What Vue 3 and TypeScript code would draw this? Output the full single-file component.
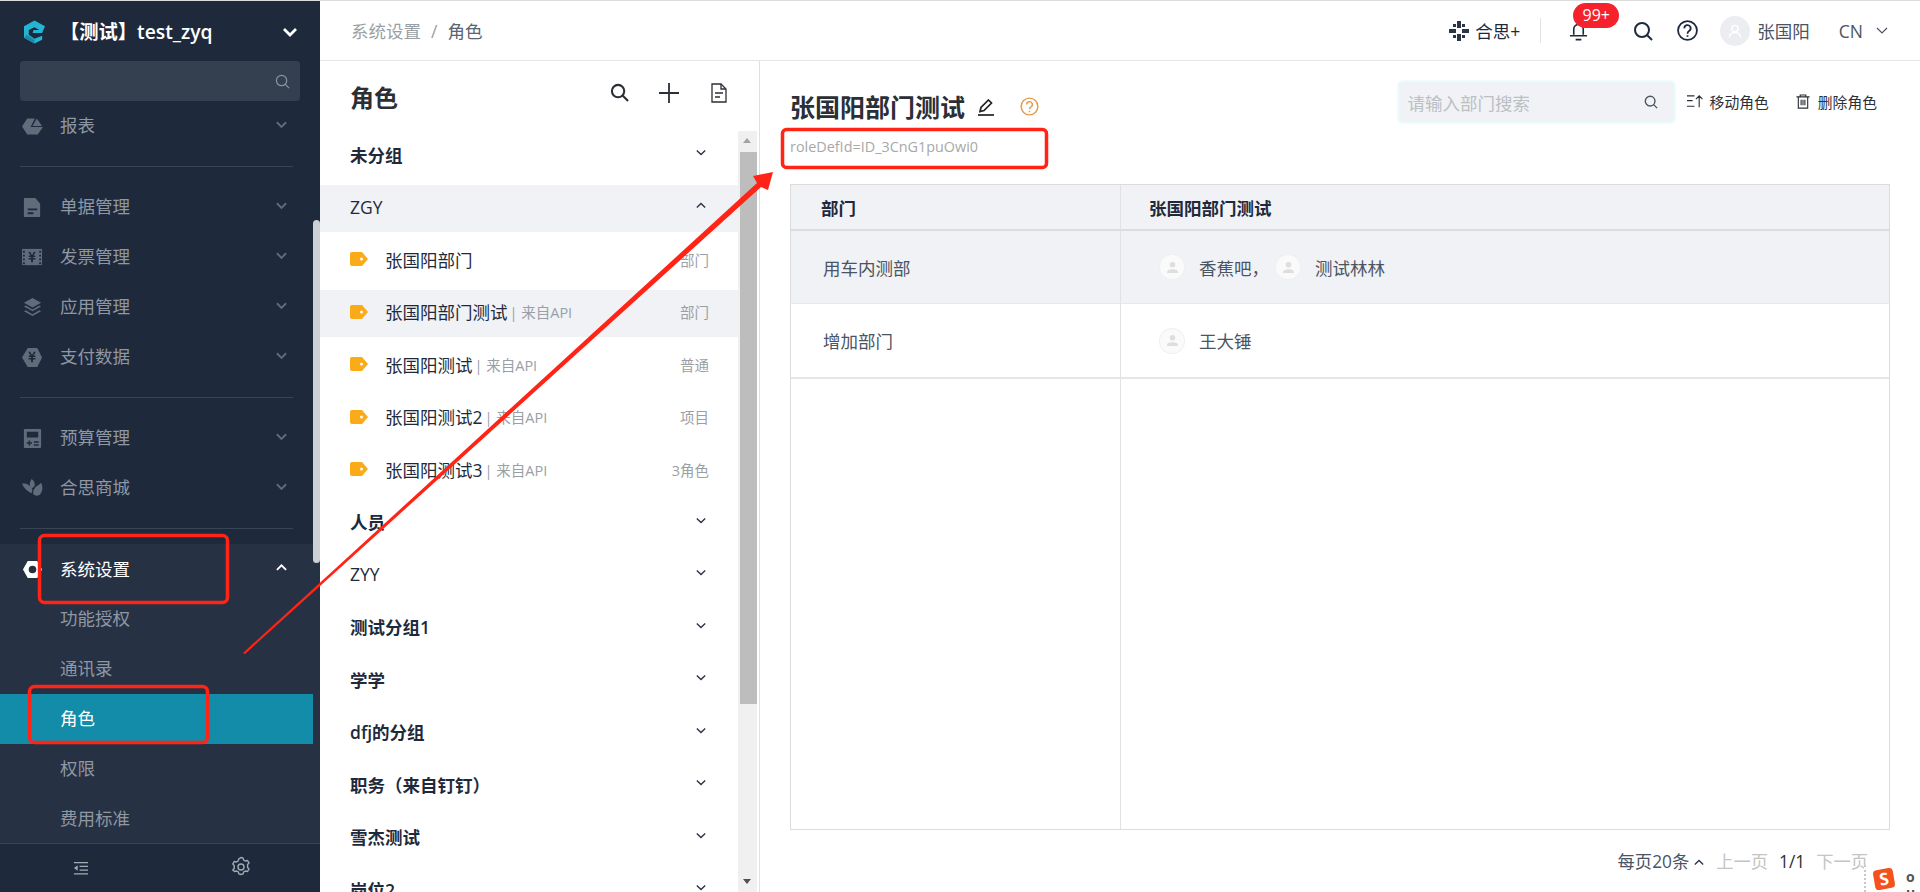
<script setup lang="ts">
interface IconPath {
  d: string;
  fill?: string;
}

interface NavItem {
  label: string;
  icon: IconPath[];
}

interface RoleRow {
  name: string;
  plain?: boolean;
  open?: boolean;
  role?: boolean;
  active?: boolean;
  api?: boolean;
  kind?: string;
}

const BG = '#1e2a3c';

const group1: NavItem[] = [
  { label: '单据管理', icon: [
    { d: 'M3 1h11l5 6v13a1 1 0 0 1-1 1H3a1 1 0 0 1-1-1V2a1 1 0 0 1 1-1z' },
    { d: 'M6 12h10v2H6zM6 16h6v2H6z', fill: BG },
  ] },
  { label: '发票管理', icon: [
    { d: 'M0 2h21v17H0z' },
    { d: 'M1 4h2v2H1zM1 8h2v2H1zM1 12h2v2H1zM1 16h2v2H1zM18 4h2v2h-2zM18 8h2v2h-2zM18 12h2v2h-2zM18 16h2v2h-2z', fill: BG },
    { d: 'M6.500 5h2l2 3.500 2-3.500h2l-2.500 4H14v1.500h-2.500v1H14V13h-2.500v3h-2v-3H7v-1.500h2.500v-1H7V9h2z', fill: BG },
  ] },
  { label: '应用管理', icon: [
    { d: 'M11 1l9 5-9 5-9-5z' },
    { d: 'M2 10l2-1 7 4 7-4 2 1-9 5z' },
    { d: 'M2 15l2-1 7 4 7-4 2 1-9 5z' },
  ] },
  { label: '支付数据', icon: [
    { d: 'M6 1h10l5 10-5 10H6L0 11z' },
    { d: 'M6.500 5h2l2 3.500 2-3.500h2l-2.500 4H14v1.500h-2.500v1H14V13h-2.500v3h-2v-3H7v-1.500h2.500v-1H7V9h2z', fill: BG },
  ] },
];

const group2: NavItem[] = [
  { label: '预算管理', icon: [
    { d: 'M3 1h16a1 1 0 0 1 1 1v18a1 1 0 0 1-1 1H3a1 1 0 0 1-1-1V2a1 1 0 0 1 1-1z' },
    { d: 'M5 4h12v6H5zM5 15h2v-2h1.500v2h2v1.500h-2v2H7v-2H5zM12.500 14h5v1.500h-5zM12.500 17h5v1.500h-5z', fill: BG },
  ] },
  { label: '合思商城', icon: [
    { d: 'M0 6c4-1 8 1 11 6l-1 4C6 14 2 11 0 6z' },
    { d: 'M10 1c3 2 4 5 3 8l-3 2-2-3c0-3 1-5 2-7z' },
    { d: 'M12 17c-1-3 1-7 4-9 2-1 3-2 4-3 2 4 2 9-1 12-2 2-5 2-7 0z' },
  ] },
];

const subItems = ['功能授权', '通讯录', '角色', '权限', '费用标准'];

const rows: RoleRow[] = [
  { name: '未分组' },
  { name: 'ZGY', plain: true, open: true },
  { name: '张国阳部门', role: true, kind: '部门' },
  { name: '张国阳部门测试', role: true, active: true, api: true, kind: '部门' },
  { name: '张国阳测试', role: true, api: true, kind: '普通' },
  { name: '张国阳测试2', role: true, api: true, kind: '项目' },
  { name: '张国阳测试3', role: true, api: true, kind: '3角色' },
  { name: '人员' },
  { name: 'ZYY', plain: true },
  { name: '测试分组1' },
  { name: '学学' },
  { name: 'dfj的分组' },
  { name: '职务（来自钉钉）' },
  { name: '雪杰测试' },
  { name: '岗位2' },
];
</script>

<template>
  <div class="page">
    <aside class="sidebar">
      <div class="brand">
        <svg class="logo" viewBox="0 0 22 24">
          <path d="M11 0l11 6-3 7H9l1-3h6l-5-3-6 3v5l6 4 8-3v4l-8 4-11-6V6z" fill="#23b5d3" />
          <path d="M0 18l11 6v-4L3 15z" fill="#1a8aa6" />
        </svg>
        <span class="brand-name">【测试】test_zyq</span>
        <svg class="brand-arrow" viewBox="0 0 16 10"><path d="M2 2l6 6 6-6" /></svg>
      </div>
      <div class="side-search">
        <svg viewBox="0 0 16 16"><circle cx="7" cy="7" r="5.500" /><path d="M11 11l4 4" /></svg>
      </div>

      <nav class="nav">
        <div class="nav-item">
          <svg class="nav-icon" viewBox="0 0 22 22">
            <path d="M5.500 2.500h8L9 11.500h13l-5.500 8h-11L0 11z" fill="#616c7b" />
            <path d="M15.500 2.500l5.500 8H11z" fill="#616c7b" />
          </svg>
          <span>报表</span>
          <svg class="chev" viewBox="0 0 12 8"><path d="M1 1l5 5 5-5" /></svg>
        </div>
        <div class="nav-line"></div>

        <div v-for="item in group1" :key="item.label" class="nav-item">
          <svg class="nav-icon" viewBox="0 0 22 22">
            <path v-for="p in item.icon" :key="p.d" :d="p.d" :fill="p.fill || '#616c7b'" />
          </svg>
          <span>{{ item.label }}</span>
          <svg class="chev" viewBox="0 0 12 8"><path d="M1 1l5 5 5-5" /></svg>
        </div>
        <div class="nav-line"></div>

        <div v-for="item in group2" :key="item.label" class="nav-item">
          <svg class="nav-icon" viewBox="0 0 22 22">
            <path v-for="p in item.icon" :key="p.d" :d="p.d" :fill="p.fill || '#616c7b'" />
          </svg>
          <span>{{ item.label }}</span>
          <svg class="chev" viewBox="0 0 12 8"><path d="M1 1l5 5 5-5" /></svg>
        </div>
        <div class="nav-line"></div>

        <div class="nav-open">
          <div class="nav-item current">
            <svg class="nav-icon" viewBox="0 0 22 22">
              <path fill-rule="evenodd" d="M6 2h10l5 9-5 9H6l-5-9zM11 7a4 4 0 1 0 0 8 4 4 0 0 0 0-8z" fill="#fff" />
            </svg>
            <span>系统设置</span>
            <svg class="chev up" viewBox="0 0 12 8"><path d="M1 6l5-5 5 5" /></svg>
          </div>
          <div v-for="sub in subItems" :key="sub" class="nav-sub" :class="{ on: sub === '角色' }">{{ sub }}</div>
        </div>
        <div class="nav-thumb"></div>
      </nav>

      <div class="side-foot">
        <svg class="collapse" viewBox="0 0 18 16">
          <path d="M2 1h15v1.500H2zM8 5h9v1.500H8zM8 9h9v1.500H8zM2 13h15v1.500H2zM6 4.500v6l-4-3z" />
        </svg>
        <svg class="gear" viewBox="0 0 20 20">
          <path d="M10 1.500l2 .5.700 2 1.800 1 2-.500 1.500 2.500-1.400 1.600v2.800l1.400 1.600-1.500 2.500-2-.500-1.800 1-.700 2-2 .500-2-.500-.700-2-1.800-1-2 .500L1.800 14l1.400-1.600V9.600L1.800 8l1.500-2.500 2 .500 1.800-1 .700-2z" />
          <circle cx="10" cy="11" r="3" />
        </svg>
      </div>
    </aside>

    <div class="main">
      <header class="topbar">
        <div class="crumb"><span>系统设置</span><i>/</i><b>角色</b></div>
        <div class="tools">
          <svg class="hesi" viewBox="0 0 20 20" fill="#2b3545">
            <path d="M8 0h4v7H8zM8 13h4v7H8zM0 8h7v4H0zM13 8h7v4h-7zM4 3h3v3H4zM13 3h3v3h-3zM4 14h3v3H4zM13 14h3v3h-3z" />
          </svg>
          <span class="hesi-text">合思+</span>
          <span class="tool-line"></span>
          <div class="bell">
            <svg viewBox="0 0 20 18"><path d="M5 12V6a5 5 0 0 1 10 0v6M1 13h18M7 17h6" /></svg>
            <span class="badge">99+</span>
          </div>
          <svg class="tool-search" viewBox="0 0 20 20"><circle cx="9" cy="9" r="7" /><path d="M14 14l5 5" /></svg>
          <svg class="tool-help" viewBox="0 0 20 20">
            <circle cx="10" cy="10" r="9" />
            <path d="M7 8a3 3 0 1 1 4.500 2.500c-1 .600-1.500 1-1.500 2.500" />
            <path d="M10 14.500v1.500" />
          </svg>
          <div class="user-pic">
            <svg viewBox="0 0 20 20"><circle cx="10" cy="7" r="4" /><path d="M3 18c0-4 3-6 7-6s7 2 7 6" /></svg>
          </div>
          <span class="user-name">张国阳</span>
          <span class="lang">CN</span>
          <svg class="lang-arrow" viewBox="0 0 12 8"><path d="M1 1l5 5 5-5" /></svg>
        </div>
      </header>

      <div class="content">
        <section class="role-panel">
          <div class="role-head">
            <h2>角色</h2>
            <div class="role-tools">
              <svg class="rt-search" viewBox="0 0 20 20"><circle cx="8.500" cy="8.500" r="6.500" /><path d="M13 13l6 6" /></svg>
              <svg class="rt-plus" viewBox="0 0 20 20"><path d="M10 0v20M0 10h20" /></svg>
              <svg class="rt-doc" viewBox="0 0 16 20">
                <path d="M1 1h9l5 5v13H1z" />
                <path d="M10 1v5h5M4 10h8M4 14h5" />
              </svg>
            </div>
          </div>
          <div class="role-body">
            <ul class="role-list">
              <li
                v-for="row in rows"
                :key="row.name"
                class="row"
                :class="{ group: !row.role, plain: row.plain, open: row.open, active: row.active }"
              >
                <svg v-if="row.role" class="tag" viewBox="0 0 18 14">
                  <path d="M2 0h10l6 7-6 7H2a2 2 0 0 1-2-2V2a2 2 0 0 1 2-2z" fill="#fbab18" />
                  <circle cx="11.500" cy="7" r="1.500" fill="#fff" />
                </svg>
                <span class="row-name">{{ row.name }}</span>
                <span v-if="row.api" class="row-api">| 来自API</span>
                <span v-if="row.kind" class="row-kind">{{ row.kind }}</span>
                <svg v-if="!row.role" class="row-chev" viewBox="0 0 12 8">
                  <path :d="row.open ? 'M1 6.500l5-5 5 5' : 'M1 1.500l5 5 5-5'" />
                </svg>
              </li>
            </ul>
            <div class="scroll">
              <span class="sc-up"></span>
              <span class="sc-thumb"></span>
              <span class="sc-down"></span>
            </div>
          </div>
        </section>

        <section class="detail">
          <div class="detail-top">
            <div class="detail-title">
              <h1>张国阳部门测试</h1>
              <svg class="edit" viewBox="0 0 16 17">
                <path d="M10.500 1l3 3-7.500 7.500-4 1 1-4z" fill="none" stroke="#222" stroke-width="1.700" />
                <path d="M0 16h16" stroke="#222" stroke-width="1.700" />
              </svg>
              <svg class="hint" viewBox="0 0 20 20">
                <circle cx="10" cy="10" r="8.800" />
                <path d="M7 8a3 3 0 1 1 4.500 2.500c-1 .600-1.500 1-1.500 2.500M10 14.500v1.500" />
              </svg>
            </div>
            <div class="detail-tools">
              <div class="dept-search">
                <span>请输入部门搜索</span>
                <svg viewBox="0 0 16 16"><circle cx="7" cy="7" r="5.500" /><path d="M11 11l4 4" /></svg>
              </div>
              <div class="action move">
                <svg viewBox="0 0 18 16"><path d="M1 2h8M1 7h6M1 13h8M14 14V2M10.500 5.500L14 2l3.500 3.500" /></svg>
                <span>移动角色</span>
              </div>
              <div class="action del">
                <svg viewBox="0 0 14 16"><path d="M0 3h14M4 3V1h6v2M2 3v12h10V3M5 6v6M7 6v6M9 6v6" /></svg>
                <span>删除角色</span>
              </div>
            </div>
          </div>
          <p class="role-id">roleDefId=ID_3CnG1puOwi0</p>

          <div class="table">
            <div class="cell th">部门</div>
            <div class="cell th second">张国阳部门测试</div>
            <div class="cell tint">用车内测部</div>
            <div class="cell tint second people">
              <span class="person">
                <span class="face"><svg viewBox="0 0 14 14"><circle cx="7" cy="4" r="3" /><path d="M1 13c0-3 2-4 6-4s6 1 6 4z" /></svg></span>
                香蕉吧，
              </span>
              <span class="person">
                <span class="face"><svg viewBox="0 0 14 14"><circle cx="7" cy="4" r="3" /><path d="M1 13c0-3 2-4 6-4s6 1 6 4z" /></svg></span>
                测试林林
              </span>
            </div>
            <div class="cell thick">增加部门</div>
            <div class="cell thick second people">
              <span class="person">
                <span class="face"><svg viewBox="0 0 14 14"><circle cx="7" cy="4" r="3" /><path d="M1 13c0-3 2-4 6-4s6 1 6 4z" /></svg></span>
                王大锤
              </span>
            </div>
            <div class="cell blank"></div>
            <div class="cell blank second"></div>
          </div>

          <div class="pager">
            <span class="per">每页20条</span>
            <svg viewBox="0 0 12 8"><path d="M1 6.500l5-5 5 5" /></svg>
            <span class="off">上一页</span>
            <span class="num">1/1</span>
            <span class="off">下一页</span>
          </div>
        </section>
      </div>
    </div>

    <svg class="marks" viewBox="0 0 1920 892">
      <rect x="39.500" y="535.500" width="188" height="67" rx="5" />
      <rect x="29.500" y="686.500" width="178" height="56" rx="5" />
      <rect x="782.500" y="129.500" width="264" height="38" rx="4" />
      <path class="arrow" d="M243 653L757 183L753 176L773 172L768 190L761 187L245 654z" />
    </svg>

    <div class="ime">
      <span class="ime-logo">S</span>
      <span class="ime-keys"><span>o</span><span>u</span></span>
    </div>
  </div>
</template>

<style>
html,
body {
  margin: 0;
  background: #fff;
}
</style>

<style scoped>
.page {
  position: relative;
  display: flex;
  width: 1920px;
  height: 892px;
  overflow: hidden;
  box-sizing: border-box;
  border-top: 1px solid #dcdcdc;
  font-family: 'Open Sans', 'Noto Sans CJK SC', sans-serif;
  color: #1e2a3c;
}

svg {
  display: block;
  flex: none;
}

/* sidebar */
.sidebar {
  width: 320px;
  flex: none;
  display: flex;
  flex-direction: column;
  background: #1e2a3c;
}

.brand {
  height: 59px;
  flex: none;
  display: flex;
  align-items: center;
  padding: 3px 22px 0 24px;
  box-sizing: border-box;
}

.logo {
  width: 21px;
  height: 24px;
}

.brand-name {
  margin-left: 15px;
  font-size: 19.300px;
  line-height: 26px;
  font-weight: 600;
  color: #fff;
  white-space: nowrap;
}

.brand-arrow {
  width: 16px;
  height: 10px;
  margin-left: auto;
  fill: none;
  stroke: #fff;
  stroke-width: 2.800;
}

.side-search {
  height: 40px;
  flex: none;
  margin: 1px 20px 0;
  display: flex;
  align-items: center;
  justify-content: flex-end;
  padding-right: 10px;
  background: #343f50;
  border-radius: 4px;
}

.side-search svg {
  width: 15px;
  height: 15px;
  fill: none;
  stroke: #8a93a0;
  stroke-width: 1.300;
}

.nav {
  position: relative;
  flex: 1;
  min-height: 0;
  overflow: hidden;
}

.nav-item {
  width: 313px;
  height: 50px;
  display: flex;
  align-items: center;
  box-sizing: border-box;
  padding-left: 22px;
  font-size: 17.500px;
  color: #8f97a3;
}

.nav-item > span {
  margin-left: 17px;
  padding-bottom: 3px;
}

.nav-icon {
  width: 21px;
  height: 21px;
}

.chev {
  width: 11px;
  height: 8px;
  margin-left: auto;
  margin-right: 26px;
  margin-bottom: 3px;
  fill: none;
  stroke: #616c7b;
  stroke-width: 2;
}

.nav-line {
  height: 1px;
  margin: 15px 27px 15px 20px;
  background: #394454;
}

.nav-open {
  background: #263244;
}

.current {
  color: #fff;
}

.current > span {
  padding-bottom: 1px;
}

.up {
  stroke: #fff;
}

.nav-sub {
  width: 313px;
  height: 50px;
  box-sizing: border-box;
  padding-left: 60px;
  line-height: 49px;
  font-size: 17.500px;
  color: #8f97a3;
}

.nav-sub.on {
  background: #138ca9;
  color: #fff;
}

.nav-thumb {
  position: absolute;
  top: 119px;
  right: 0;
  width: 7px;
  height: 343px;
  border-radius: 4px;
  background: #cdd1d6;
}

.side-foot {
  position: relative;
  height: 49px;
  flex: none;
  border-top: 1px solid #394454;
  box-sizing: border-box;
  display: flex;
  align-items: center;
}

.collapse {
  width: 17px;
  height: 15px;
  margin-left: 72px;
  fill: #a3aab4;
}

.gear {
  width: 20px;
  height: 20px;
  margin-left: 142px;
  margin-top: -4px;
  fill: none;
  stroke: #a3aab4;
  stroke-width: 1.400;
}

/* top bar */
.main {
  flex: 1;
  min-width: 0;
  display: flex;
  flex-direction: column;
}

.topbar {
  height: 60px;
  flex: none;
  display: flex;
  align-items: center;
  justify-content: space-between;
  box-sizing: border-box;
  padding: 0 32px 0 31px;
  border-bottom: 1px solid #e6e6e6;
}

.crumb {
  font-size: 17.500px;
  color: #9a9fa6;
}

.crumb i {
  font-style: normal;
  margin: 0 10px;
}

.crumb b {
  font-weight: 400;
  color: #5a6472;
}

.tools {
  display: flex;
  align-items: center;
}

.hesi {
  width: 20px;
  height: 20px;
}

.hesi-text {
  margin-left: 6px;
  font-size: 17.500px;
  color: #1e2a3c;
}

.tool-line {
  width: 1px;
  height: 25px;
  margin: 0 28px 0 20px;
  background: #e3e3e3;
}

.bell {
  position: relative;
  width: 19px;
  height: 18px;
  margin-top: 3px;
}

.bell svg {
  width: 19px;
  height: 18px;
  fill: none;
  stroke: #1e2a3c;
  stroke-width: 1.700;
}

.badge {
  position: absolute;
  left: 4px;
  top: -20px;
  width: 46px;
  height: 25px;
  border-radius: 13px;
  background: #f5222d;
  color: #fff;
  font-size: 16px;
  line-height: 25px;
  text-align: center;
}

.tool-search {
  width: 20px;
  height: 20px;
  margin-left: 45px;
  fill: none;
  stroke: #1e2a3c;
  stroke-width: 2;
}

.tool-help {
  width: 21px;
  height: 21px;
  margin-left: 24px;
  fill: none;
  stroke: #1e2a3c;
  stroke-width: 1.700;
}

.user-pic {
  width: 30px;
  height: 30px;
  margin-left: 22px;
  border-radius: 50%;
  background: #ebedf0;
  display: flex;
  align-items: center;
  justify-content: center;
}

.user-pic svg {
  width: 16px;
  height: 16px;
  fill: none;
  stroke: #fff;
  stroke-width: 1.800;
}

.user-name {
  margin-left: 7px;
  font-size: 17.500px;
  color: #4a5463;
}

.lang {
  margin-left: 29px;
  font-size: 17.500px;
  color: #4a5463;
}

.lang-arrow {
  width: 12px;
  height: 8px;
  margin-left: 13px;
  fill: none;
  stroke: #4a5463;
  stroke-width: 1.200;
}

/* role list */
.content {
  flex: 1;
  min-height: 0;
  display: flex;
}

.role-panel {
  width: 440px;
  flex: none;
  box-sizing: border-box;
  border-right: 1px solid #e0e0e0;
  display: flex;
  flex-direction: column;
}

.role-head {
  height: 70px;
  flex: none;
  display: flex;
  align-items: center;
  justify-content: space-between;
  padding: 0 32px 0 30px;
  box-sizing: border-box;
}

.role-head h2 {
  margin: 0;
  font-size: 24px;
  font-weight: 700;
  color: #2b2f36;
}

.role-tools {
  display: flex;
  align-items: center;
  margin-top: -7px;
}

.role-tools svg {
  fill: none;
  stroke: #2b2f36;
}

.rt-search {
  width: 19px;
  height: 19px;
  stroke-width: 2.200;
}

.rt-plus {
  width: 20px;
  height: 20px;
  margin-left: 30px;
  stroke-width: 1.800;
}

.rt-doc {
  width: 16px;
  height: 20px;
  margin-left: 32px;
  stroke-width: 1.300;
}

.role-body {
  flex: 1;
  min-height: 0;
  display: flex;
}

.role-list {
  width: 418px;
  flex: none;
  margin: 0;
  padding: 1px 0 0;
  list-style: none;
  overflow: hidden;
}

.row {
  height: 47px;
  margin-bottom: 5.500px;
  display: flex;
  align-items: center;
  box-sizing: border-box;
  padding: 0 29px 3px 30px;
  font-size: 17.500px;
  white-space: nowrap;
}

.group {
  font-weight: 600;
  color: #1e2a3c;
}

.group.plain {
  font-weight: 500;
}

.group.open,
.row.active {
  background: #f0f2f5;
}

.tag {
  width: 18px;
  height: 14px;
  margin-right: 17px;
}

.row-name {
  color: #1e2a3c;
}

.row-api {
  margin-left: 2px;
  font-size: 14.500px;
  color: #9a9fa6;
}

.row-kind {
  margin-left: auto;
  font-size: 14.500px;
  color: #9a9fa6;
}

.row-chev {
  width: 10px;
  height: 7px;
  margin-left: auto;
  margin-right: 3px;
  margin-bottom: 3px;
  fill: none;
  stroke: #2b3545;
  stroke-width: 1.700;
}

.scroll {
  position: relative;
  width: 19px;
  flex: none;
  background: #f0f0f0;
}

.sc-up,
.sc-down {
  position: absolute;
  left: 5px;
  border-left: 4.500px solid transparent;
  border-right: 4.500px solid transparent;
}

.sc-up {
  top: 7px;
  border-bottom: 5px solid #a3a3a3;
}

.sc-down {
  bottom: 8px;
  border-top: 5px solid #505050;
}

.sc-thumb {
  position: absolute;
  left: 2px;
  top: 21px;
  width: 17px;
  height: 552px;
  background: #bdbdbd;
}

/* detail */
.detail {
  flex: 1;
  min-width: 0;
  box-sizing: border-box;
  padding: 21px 30px 0;
}

.detail-top {
  height: 41px;
  display: flex;
  justify-content: space-between;
  align-items: flex-start;
}

.detail-title {
  display: flex;
  align-items: center;
  padding-top: 9px;
}

.detail-title h1 {
  margin: 0;
  font-size: 25px;
  line-height: 32px;
  font-weight: 700;
  color: #2b2f36;
  white-space: nowrap;
}

.edit {
  width: 16px;
  height: 17px;
  margin-left: 13px;
}

.hint {
  width: 19px;
  height: 19px;
  margin: -2px 0 0 26px;
  fill: none;
  stroke: #e59a4e;
  stroke-width: 1.500;
}

.detail-tools {
  display: flex;
  align-items: center;
  padding-right: 13px;
}

.dept-search {
  width: 275px;
  height: 40px;
  box-sizing: border-box;
  display: flex;
  align-items: center;
  justify-content: space-between;
  padding: 0 16px 0 9px;
  border-radius: 4px;
  background: #f0f2f5;
  box-shadow: 0 0 0 2px #ebfcff;
  font-size: 17.500px;
  color: #bcbfc4;
}

.dept-search svg {
  width: 14px;
  height: 14px;
  fill: none;
  stroke: #4a5463;
  stroke-width: 1.600;
}

.action {
  display: flex;
  align-items: center;
  font-size: 14.800px;
  color: #2b2f36;
  white-space: nowrap;
  padding-bottom: 1px;
}

.move {
  margin-left: 12px;
}

.move svg {
  width: 17px;
  height: 15px;
  margin-right: 7px;
  fill: none;
  stroke: #2b2f36;
  stroke-width: 1.200;
}

.del {
  margin-left: 27px;
}

.del svg {
  width: 14px;
  height: 15px;
  margin-right: 8px;
  fill: none;
  stroke: #2b2f36;
  stroke-width: 1.200;
}

.role-id {
  margin: 14px 0 0;
  height: 20px;
  font-size: 14.400px;
  line-height: 20px;
  color: #a8a8a8;
}

.table {
  margin-top: 27px;
  height: 646px;
  box-sizing: border-box;
  border: 1px solid #dcdcdc;
  display: grid;
  grid-template-columns: 329px 1fr;
  grid-template-rows: 46px 73px 75px 1fr;
}

.cell {
  display: flex;
  align-items: center;
  box-sizing: border-box;
  padding-left: 32px;
  font-size: 17.500px;
  color: #4a5463;
  border-bottom: 1px solid #e8e8e8;
}

.second {
  border-left: 1px solid #e2e2e2;
  padding-left: 28px;
}

.th {
  background: #f0f2f5;
  border-bottom: 2px solid #dcdcdc;
  font-weight: 700;
  color: #1e2a3c;
  padding-left: 30px;
}

.th.second {
  padding-left: 28px;
}

.tint {
  background: #f0f2f5;
}

.thick {
  border-bottom: 2px solid #e6e6e6;
}

.blank {
  border-bottom: 0;
}

.people {
  padding-left: 39px;
}

.person {
  display: flex;
  align-items: center;
  margin-right: 7px;
}

.face {
  width: 24px;
  height: 24px;
  margin-right: 15px;
  border-radius: 50%;
  background: #fafafa;
  box-shadow: 0 0 0 1px #f0f0f0;
  display: flex;
  align-items: center;
  justify-content: center;
}

.face svg {
  width: 13px;
  height: 13px;
  fill: #dedede;
}

.pager {
  display: flex;
  align-items: center;
  justify-content: flex-end;
  margin-top: 19px;
  padding-right: 22px;
  font-size: 17.300px;
  line-height: 26px;
}

.per {
  color: #4a5463;
}

.pager svg {
  width: 10px;
  height: 7px;
  margin: 0 12px 0 5px;
  fill: none;
  stroke: #2b3545;
  stroke-width: 1.600;
}

.off {
  color: #c4c4c4;
}

.num {
  margin: 0 11px;
  color: #2b2f36;
}

/* annotations and ime, drawn on top of the page */
.marks {
  position: absolute;
  left: 0;
  top: -1px;
  width: 1920px;
  height: 892px;
  pointer-events: none;
}

.marks rect {
  fill: none;
  stroke: #ff2415;
  stroke-width: 3.500;
}

.arrow {
  fill: #ff2415;
}

.ime {
  position: absolute;
  right: 0;
  bottom: 0;
  width: 56px;
  height: 27px;
  box-sizing: border-box;
  background: #fff;
  border-left: 2px dotted #c8c8c8;
  display: flex;
  align-items: flex-start;
  padding-left: 8px;
  padding-top: 4px;
}

.ime-logo {
  width: 20px;
  height: 20px;
  border-radius: 4px;
  background: #f4511e;
  color: #fff;
  font-size: 17px;
  font-weight: 700;
  line-height: 20px;
  text-align: center;
  transform: rotate(-10deg);
}

.ime-keys {
  margin-left: 12px;
  font-size: 14px;
  font-weight: 700;
  line-height: 16px;
  color: #555;
  display: flex;
  flex-direction: column;
}
</style>
